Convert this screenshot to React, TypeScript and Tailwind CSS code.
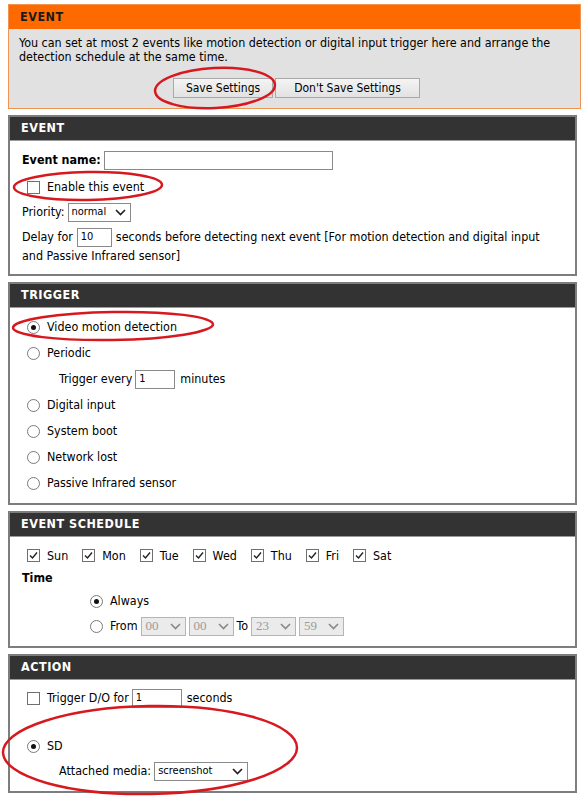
import React from "react";

const FONT = { fontFamily: '"DejaVu Sans Condensed", "DejaVu Sans", sans-serif' };

function Check({ checked }: { checked?: boolean }) {
  return (
    <span className="inline-flex h-[13px] w-[13px] shrink-0 items-center justify-center border border-[#707070] bg-white">
      {checked && (
        <svg width="9" height="9" viewBox="0 0 9 9">
          <path d="M1 4.5 L3.5 7 L8 1.5" fill="none" stroke="#222" strokeWidth="1.4" />
        </svg>
      )}
    </span>
  );
}

function Radio({ checked }: { checked?: boolean }) {
  return (
    <span className="inline-flex h-[13px] w-[13px] shrink-0 items-center justify-center rounded-full border border-[#7a7a7a] bg-white">
      {checked && <span className="h-[5px] w-[5px] rounded-full bg-[#111]" />}
    </span>
  );
}

function Chevron({ color = "#222" }: { color?: string }) {
  return (
    <svg width="11" height="7" viewBox="0 0 11 7">
      <path d="M1 1 L5.5 5.5 L10 1" fill="none" stroke={color} strokeWidth="1.7" />
    </svg>
  );
}

function Select({ value, w }: { value: string; w: string }) {
  return (
    <span className={`inline-flex h-[19px] items-center justify-between border border-[#8a8a8a] bg-white pl-[3px] pr-[4px] text-[11px] ${w}`}>
      <span>{value}</span>
      <Chevron />
    </span>
  );
}

function TimeSelect({ value }: { value: string }) {
  return (
    <span className="inline-flex h-[19px] w-[45px] items-center justify-between border border-[#b5b5b5] bg-[#ebebeb] pl-[4px] pr-[4px] text-[13px] text-[#9a9a9a]" style={{ fontFamily: '"Liberation Serif", serif' }}>
      <span>{value}</span>
      <Chevron color="#8a8a8a" />
    </span>
  );
}

function Input({ value = "", w }: { value?: string; w: string }) {
  return (
    <span className={`inline-flex h-[19px] shrink-0 items-center border border-[#8a8a8a] bg-white px-[3px] text-[11px] ${w}`}>
      {value}
    </span>
  );
}

function Section({ title, children }: { title: string; children: React.ReactNode }) {
  return (
    <div className="border-2 border-[#7d7d7d] bg-white">
      <div className="flex h-[24px] items-center border-b border-[#9a9a9a] bg-[#333333] px-[11px] text-[12.5px] font-bold tracking-[0.5px] text-white">
        {title}
      </div>
      {children}
    </div>
  );
}

export default function App() {
  return (
    <div className="relative h-[797px] w-[585px] bg-white text-[12.4px] text-black" style={FONT}>
      <div className="flex flex-col gap-[6px] px-[8px] pt-[4px]">
        {/* Orange section */}
        <div className="w-[573px] border border-[#f29350] bg-[#e1e1e1]">
          <div className="flex h-[24px] items-center bg-[#ff6a00] px-[11px] text-[12.5px] font-bold tracking-[0.5px] text-[#1a1a1a]">
            EVENT
          </div>
          <div className="pb-[10px] pl-[10px] pr-[1px] pt-[7px]">
            <p className="leading-[14px]">
              You can set at most 2 events like motion detection or digital input trigger here and arrange the detection schedule at the same time.
            </p>
            <div className="mt-[14px] flex justify-center gap-[2px] pr-[5px]">
              <span className="flex h-[20px] w-[100px] items-center justify-center border border-[#a8a8a8] bg-gradient-to-b from-[#f4f4f4] to-[#e2e2e2] text-[12px]">
                Save Settings
              </span>
              <span className="flex h-[20px] w-[145px] items-center justify-center border border-[#a8a8a8] bg-gradient-to-b from-[#f4f4f4] to-[#e2e2e2] text-[12px]">
                Don't Save Settings
              </span>
            </div>
          </div>
        </div>

        {/* EVENT */}
        <Section title="EVENT">
          <div className="flex flex-col px-[12px] pb-[9px] pt-[9px]">
            <div className="flex h-[20px] items-center gap-[3px]">
              <span className="font-bold">Event name:</span>
              <Input w="w-[229px]" />
            </div>
            <div className="mt-[4px] flex h-[26px] items-center gap-[7px] pl-[5px]">
              <Check />
              <span>Enable this event</span>
            </div>
            <div className="mt-[2px] flex h-[20px] items-center gap-[3px]">
              <span>Priority:</span>
              <Select value="normal" w="w-[63px]" />
            </div>
            <div className="mt-[6px] flex h-[19px] items-center gap-[4px]">
              <span>Delay for</span>
              <Input value="10" w="w-[35px]" />
              <span>seconds before detecting next event [For motion detection and digital input</span>
            </div>
            <div className="flex h-[18px] items-center">and Passive Infrared sensor]</div>
          </div>
        </Section>

        {/* TRIGGER */}
        <Section title="TRIGGER">
          <div className="flex flex-col px-[17px] pb-[7px] pt-[6px]">
            <div className="flex h-[26px] items-center gap-[7px]">
              <Radio checked />
              <span>Video motion detection</span>
            </div>
            <div className="flex h-[26px] items-center gap-[7px]">
              <Radio />
              <span>Periodic</span>
            </div>
            <div className="flex h-[26px] items-center gap-[3px] pl-[32px]">
              <span>Trigger every</span>
              <Input value="1" w="w-[40px]" />
              <span className="ml-[2px]">minutes</span>
            </div>
            {["Digital input", "System boot", "Network lost", "Passive Infrared sensor"].map((t) => (
              <div key={t} className="flex h-[26px] items-center gap-[7px]">
                <Radio />
                <span>{t}</span>
              </div>
            ))}
          </div>
        </Section>

        {/* EVENT SCHEDULE */}
        <Section title="EVENT SCHEDULE">
          <div className="flex flex-col px-[12px] pb-[8px] pt-[9px]">
            <div className="flex h-[20px] items-center pl-[5px]">
              {["Sun", "Mon", "Tue", "Wed", "Thu", "Fri", "Sat"].map((d) => (
                <span key={d} className="mr-[14px] flex items-center gap-[7px]">
                  <Check checked />
                  <span>{d}</span>
                </span>
              ))}
            </div>
            <div className="mt-[3px] flex h-[18px] items-center font-bold">Time</div>
            <div className="mt-[2px] flex h-[24px] items-center gap-[7px] pl-[68px]">
              <Radio checked />
              <span>Always</span>
            </div>
            <div className="mt-[1px] flex h-[24px] items-center gap-[3px] pl-[68px]">
              <Radio />
              <span className="ml-[4px]">From</span>
              <TimeSelect value="00" />
              <TimeSelect value="00" />
              <span>To</span>
              <TimeSelect value="23" />
              <TimeSelect value="59" />
            </div>
          </div>
        </Section>

        {/* ACTION */}
        <Section title="ACTION">
          <div className="flex flex-col px-[12px] pb-[10px] pt-[8px]">
            <div className="flex h-[20px] items-center gap-[3px] pl-[5px]">
              <Check />
              <span className="ml-[4px]">Trigger D/O for</span>
              <Input value="1" w="w-[50px]" />
              <span className="ml-[2px]">seconds</span>
            </div>
            <div className="mt-[28px] flex h-[20px] items-center gap-[7px] pl-[5px]">
              <Radio checked />
              <span>SD</span>
            </div>
            <div className="mt-[5px] flex h-[20px] items-center gap-[3px] pl-[37px]">
              <span>Attached media:</span>
              <Select value="screenshot" w="w-[94px]" />
            </div>
          </div>
        </Section>
      </div>

      {/* red annotation ellipses */}
      <svg className="pointer-events-none absolute left-0 top-0" width="585" height="797" viewBox="0 0 585 797">
        <g fill="none" stroke="#d7191f" strokeWidth="2.5">
          <ellipse cx="215" cy="88" rx="60" ry="20" transform="rotate(-3 215 88)" />
          <ellipse cx="88" cy="186" rx="74" ry="14" transform="rotate(-1 88 186)" />
          <ellipse cx="113" cy="326" rx="100" ry="14" transform="rotate(-1 113 326)" />
          <ellipse cx="150" cy="750" rx="147" ry="44" transform="rotate(-1 150 750)" />
        </g>
      </svg>
    </div>
  );
}
